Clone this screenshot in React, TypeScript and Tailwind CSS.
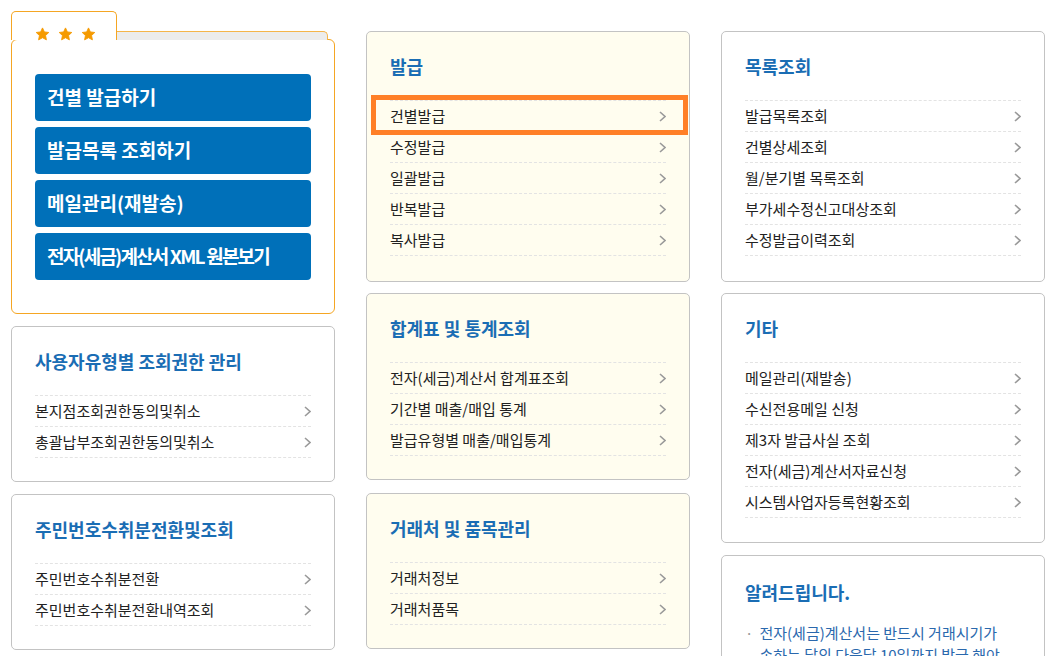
import React from "react";

type Section = { title: string; items: string[]; highlight?: number };

function Chevron() {
  return (
    <svg width="7" height="11" viewBox="0 0 7 11" className="shrink-0">
      <polyline points="1,1 6,5.5 1,10" fill="none" stroke="#9a9a9a" strokeWidth="1.6" />
    </svg>
  );
}

function Star() {
  return (
    <svg width="15" height="14" viewBox="0 0 24 23">
      <path
        d="M12 1.5l3.1 6.6 7.2.9-5.3 5 1.4 7.1L12 17.6l-6.4 3.5 1.4-7.1-5.3-5 7.2-.9z"
        fill="#f59a00"
        stroke="#f59a00"
        strokeLinejoin="round"
        strokeWidth="1.5"
      />
    </svg>
  );
}

function MenuBox({ section, cream, pb = "pb-[23px]" }: { section: Section; cream?: boolean; pb?: string }) {
  return (
    <div
      className={`rounded-[5px] border border-[#c3c3c3] px-[23px] pt-[22px] ${pb} ${
        cream ? "bg-[#fffdef]" : "bg-white"
      }`}
    >
      <h2 className="h-[24px] text-[18px] leading-[24px] font-bold text-[#1a6db4]">{section.title}</h2>
      <ul className="mt-[22px] border-t border-dashed border-[#e3e3e3]">
        {section.items.map((item, i) => (
          <li
            key={item}
            className="relative flex h-[31px] items-center justify-between border-b border-dashed border-[#e3e3e3] text-[15px] text-[#222]"
          >
            <span>{item}</span>
            <Chevron />
            {section.highlight === i && (
              <span className="pointer-events-none absolute -top-[6px] -bottom-[4px] -left-[19px] -right-[22px] border-[5px] border-[#ff7f27]" />
            )}
          </li>
        ))}
      </ul>
    </div>
  );
}

const quickButtons = [
  { label: "건별 발급하기", cls: "tracking-[0px]" },
  { label: "발급목록 조회하기", cls: "tracking-[0px]" },
  { label: "메일관리(재발송)", cls: "tracking-[0px]" },
  { label: "전자(세금)계산서 XML 원본보기", cls: "tracking-[-1.8px]" },
];

export default function App() {
  return (
    <div className="min-h-screen bg-white font-['Noto_Sans_CJK_KR','Noto_Sans',sans-serif]">
      <div className="grid grid-cols-[324px_324px_324px] gap-x-[31px] pl-[11px] pt-[11px]">
        {/* column 1 */}
        <div className="flex flex-col gap-[12px]">
          <div>
            <div className="flex h-[29px] items-end">
              <div className="relative z-10 flex h-[29px] w-[106px] items-start gap-[8px] rounded-t-[5px] border border-b-0 border-[#f5a623] bg-white pl-[23px] pt-[15px]">
                <Star />
                <Star />
                <Star />
              </div>
              <div className="relative z-10 mr-[7px] h-[9px] flex-1 rounded-tr-[5px] border-t border-r border-[#f5b54a] bg-[#ececec]" />
            </div>
            <div className="-mt-px flex flex-col gap-[6px] rounded-[6px] border border-[#f5a623] bg-white px-[23px] pt-[34px] pb-[33px]">
              {quickButtons.map((b) => (
                <div
                  key={b.label}
                  className={`flex h-[47px] items-center rounded-[4px] bg-[#0070b9] pl-[12px] text-[19px] font-bold text-white ${b.cls}`}
                >
                  {b.label}
                </div>
              ))}
            </div>
          </div>
          <MenuBox section={{ title: "사용자유형별 조회권한 관리", items: ["본지점조회권한동의및취소", "총괄납부조회권한동의및취소"] }} />
          <MenuBox section={{ title: "주민번호수취분전환및조회", items: ["주민번호수취분전환", "주민번호수취분전환내역조회"] }} />
        </div>

        {/* column 2 */}
        <div className="mt-[20px] flex flex-col">
          <MenuBox
            cream
            pb="pb-[25px]"
            section={{ title: "발급", items: ["건별발급", "수정발급", "일괄발급", "반복발급", "복사발급"], highlight: 0 }}
          />
          <div className="mt-[11px]">
            <MenuBox
              cream
              section={{
                title: "합계표 및 통계조회",
                items: ["전자(세금)계산서 합계표조회", "기간별 매출/매입 통계", "발급유형별 매출/매입통계"],
              }}
            />
          </div>
          <div className="mt-[13px]">
            <MenuBox cream section={{ title: "거래처 및 품목관리", items: ["거래처정보", "거래처품목"] }} />
          </div>
        </div>

        {/* column 3 */}
        <div className="mt-[20px] flex flex-col">
          <MenuBox
            pb="pb-[25px]"
            section={{
              title: "목록조회",
              items: ["발급목록조회", "건별상세조회", "월/분기별 목록조회", "부가세수정신고대상조회", "수정발급이력조회"],
            }}
          />
          <div className="mt-[11px]">
            <MenuBox
              pb="pb-[24px]"
              section={{
                title: "기타",
                items: ["메일관리(재발송)", "수신전용메일 신청", "제3자 발급사실 조회", "전자(세금)계산서자료신청", "시스템사업자등록현황조회"],
              }}
            />
          </div>
          <div className="mt-[12px] rounded-[5px] border border-[#c3c3c3] bg-white px-[23px] pt-[24px] pb-[20px]">
            <h2 className="h-[24px] text-[18px] leading-[24px] font-bold text-[#1a6db4]">알려드립니다.</h2>
            <div className="mt-[18px] flex gap-[6px] text-[15px] leading-[22px] text-[#2a68ad]">
              <span className="text-[#999]">·</span>
              <p>
                전자(세금)계산서는 반드시 거래시기가
                <br />
                속하는 달의 다음달 10일까지 발급 해야
                <br />
                합니다.
              </p>
            </div>
          </div>
        </div>
      </div>
    </div>
  );
}
